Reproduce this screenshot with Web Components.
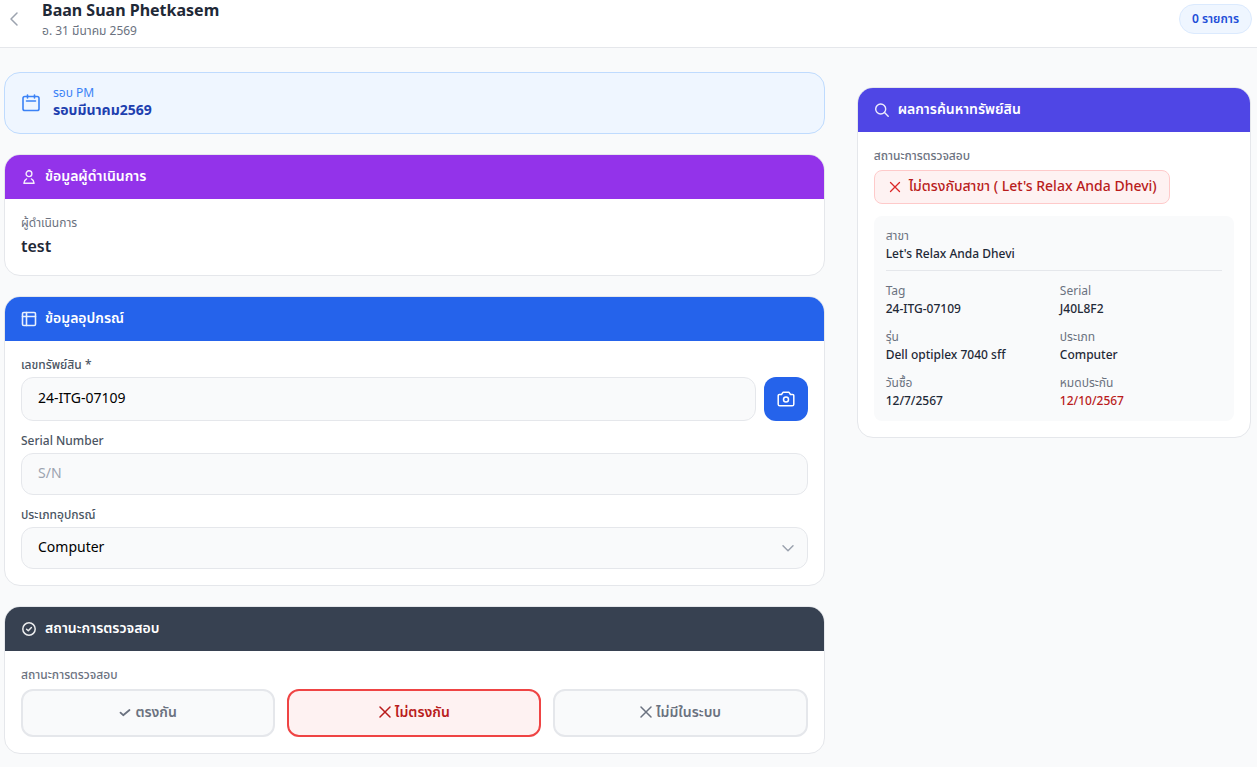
<!DOCTYPE html>
<html lang="th">
<head>
<meta charset="utf-8">
<meta name="viewport" content="width=device-width, initial-scale=1">
<title>Baan Suan Phetkasem</title>
<style>
  body { margin: 0; background: #f9fafb; color: #1f2937; font-family: "Noto Sans", "Noto Sans Thai", sans-serif; font-size: 14px; line-height: 20px; }
</style>
</head>
<body>
<pm-page></pm-page>

<template id="pm-icon">
  <style>
    :host { display: inline-flex; flex: none; width: 16px; height: 16px; }
    :host([size="12"]) { width: 12px; height: 12px; }
    :host([size="18"]) { width: 18px; height: 18px; }
    :host([size="20"]) { width: 20px; height: 20px; }
    svg { width: 100%; height: 100%; fill: none; stroke: currentColor; stroke-linecap: round; stroke-linejoin: round; }
  </style>
</template>

<template id="pm-topbar">
  <style>
    :host { display: block; background: #fff; border-bottom: 1px solid #e5e7eb; }
    header { display: flex; align-items: flex-start; padding: 0 5px 8px 4px; }
    button { display: flex; align-items: center; justify-content: center; width: 20px; height: 38px; margin: 0 18px 0 0; padding: 0; border: 0; background: none; color: #9ca3af; }
    .titles { flex: 1; }
    h1 { margin: 0 0 3px; font-size: 16px; line-height: 20px; font-weight: 700; }
    p { margin: 0; font-size: 12px; line-height: 16px; color: #6b7280; }
    .count { margin-top: 4px; padding: 6px 12px; border: 1px solid #dbeafe; border-radius: 999px; background: #eff6ff; color: #1d4ed8; font-size: 12px; line-height: 16px; font-weight: 600; }
  </style>
  <header>
    <button type="button" aria-label="กลับ"><pm-icon name="back" size="18"></pm-icon></button>
    <div class="titles"><h1><slot name="title"></slot></h1><p><slot name="date"></slot></p></div>
    <span class="count"><slot name="count"></slot></span>
  </header>
</template>

<template id="pm-round">
  <style>
    :host { display: flex; align-items: center; gap: 12px; padding: 12px 16px; border: 1px solid #bfdbfe; border-radius: 16px; background: #eff6ff; }
    pm-icon { color: #3b82f6; }
    .k { font-size: 12px; line-height: 16px; color: #3b82f6; }
    .v { padding-bottom: 2px; font-weight: 700; line-height: 18px; color: #1e40af; }
  </style>
  <pm-icon name="calendar" size="20"></pm-icon>
  <div><div class="k"><slot name="label"></slot></div><div class="v"><slot></slot></div></div>
</template>

<template id="pm-card">
  <style>
    :host { display: block; overflow: hidden; border: 1px solid #e5e7eb; border-radius: 16px; background: #fff; }
    .head { display: flex; align-items: center; gap: 8px; padding: 12px 16px; background: var(--head); color: #fff; }
    .head pm-icon { opacity: .9; }
    h2 { margin: 0; padding-bottom: 2px; font-size: 14px; line-height: 18px; font-weight: 600; }
    .body { padding: 16px; }
  </style>
  <div class="head"><pm-icon></pm-icon><h2></h2></div>
  <div class="body"><slot></slot></div>
</template>

<template id="pm-item">
  <style>
    :host { display: block; font-size: 12px; line-height: 16px; }
    .k { margin-bottom: 2px; color: #6b7280; }
    .v { font-weight: 500; color: #1f2937; }
    :host([expired]) .v { color: #b91c1c; }
    :host([large]) .k { margin-bottom: 4px; }
    :host([large]) .v { padding-bottom: 2px; font-size: 16px; line-height: 22px; font-weight: 600; }
  </style>
  <div class="k"></div><div class="v"><slot></slot></div>
</template>

<template id="pm-device-form">
  <style>
    :host { display: block; }
    form { display: grid; gap: 12px; }
    label { display: block; margin-bottom: 4px; font-size: 12px; line-height: 16px; font-weight: 500; color: #4b5563; }
    input, select { box-sizing: border-box; display: block; width: 100%; height: 42px; margin: 0; padding: 0 16px 2px; border: 1px solid #e5e7eb; border-radius: 12px; background: #f9fafb; color: #000; font: inherit; appearance: none; outline: none; }
    input { padding-bottom: 4px; }
    input::placeholder { color: #9ca3af; opacity: 1; }
    .row { display: flex; gap: 8px; }
    .row input { flex: 1; min-width: 0; height: 44px; }
    button { display: flex; align-items: center; justify-content: center; width: 44px; height: 44px; padding: 0; border: 0; border-radius: 12px; background: #2563eb; color: #fff; }
    .pick { display: grid; align-items: center; }
    .pick > * { grid-area: 1 / 1; }
    .pick pm-icon { justify-self: end; margin-right: 12px; color: #9ca3af; pointer-events: none; }
  </style>
  <form>
    <div>
      <label for="asset">เลขทรัพย์สิน *</label>
      <div class="row"><input id="asset" type="text" value="24-ITG-07109"><button type="button" aria-label="สแกน"><pm-icon name="camera" size="18"></pm-icon></button></div>
    </div>
    <div><label for="serial">Serial Number</label><input id="serial" type="text" placeholder="S/N"></div>
    <div>
      <label for="type">ประเภทอุปกรณ์</label>
      <div class="pick"><select id="type"><option>Computer</option></select><pm-icon name="down"></pm-icon></div>
    </div>
  </form>
</template>

<template id="pm-status-choice">
  <style>
    :host { display: block; }
    .label { margin-bottom: 6px; font-size: 12px; line-height: 16px; font-weight: 500; color: #6b7280; }
    .group { display: grid; grid-template-columns: repeat(3, 1fr); gap: 12px; }
    button { display: flex; align-items: center; justify-content: center; gap: 4px; height: 48px; padding: 0 0 2px; border: 2px solid #e5e7eb; border-radius: 12px; background: #f9fafb; color: #6b7280; font: inherit; font-weight: 600; }
    button[aria-pressed="true"] { border-color: #ef4444; background: #fef2f2; color: #b91c1c; }
  </style>
  <div class="label" id="l">สถานะการตรวจสอบ</div>
  <div class="group" role="group" aria-labelledby="l">
    <button type="button" aria-pressed="false"><pm-icon name="check" size="12"></pm-icon>ตรงกัน</button>
    <button type="button" aria-pressed="true"><pm-icon name="cross" size="12"></pm-icon>ไม่ตรงกัน</button>
    <button type="button" aria-pressed="false"><pm-icon name="cross" size="12"></pm-icon>ไม่มีในระบบ</button>
  </div>
</template>

<template id="pm-result">
  <style>
    :host { display: block; }
    .label { margin-bottom: 6px; font-size: 12px; line-height: 16px; font-weight: 500; color: #6b7280; }
    .badge { display: flex; width: fit-content; align-items: center; gap: 8px; margin-bottom: 12px; padding: 6px 12px 6px 14px; border: 1px solid #fecaca; border-radius: 8px; background: #fef2f2; color: #b91c1c; font-weight: 500; }
    .badge span { padding-bottom: 2px; line-height: 18px; }
    .badge pm-icon { color: #dc2626; }
    .panel { padding: 12px; border-radius: 8px; background: #f9fafb; }
    .branch { padding-bottom: 8px; margin-bottom: 12px; border-bottom: 1px solid #e5e7eb; }
    .facts { display: grid; grid-template-columns: 1fr 1fr; gap: 12px; }
  </style>
  <div class="label">สถานะการตรวจสอบ</div>
  <div class="badge"><pm-icon name="crossSmall" size="12"></pm-icon><span>ไม่ตรงกับสาขา ( Let's Relax Anda Dhevi)</span></div>
  <div class="panel">
    <pm-item class="branch" label="สาขา">Let's Relax Anda Dhevi</pm-item>
    <div class="facts">
      <pm-item label="Tag">24-ITG-07109</pm-item>
      <pm-item label="Serial">J40L8F2</pm-item>
      <pm-item label="รุ่น">Dell optiplex 7040 sff</pm-item>
      <pm-item label="ประเภท">Computer</pm-item>
      <pm-item label="วันซื้อ">12/7/2567</pm-item>
      <pm-item label="หมดประกัน" expired>12/10/2567</pm-item>
    </div>
  </div>
</template>

<template id="pm-page">
  <style>
    :host { display: block; }
    main { display: grid; grid-template-columns: repeat(3, minmax(0, 1fr)); column-gap: 32px; align-items: start; padding: 24px 6px 13px 4px; }
    .left { display: grid; grid-column: span 2; gap: 20px; }
    aside { padding-top: 15px; }
    .purple { --head: #9333ea; }
    .blue { --head: #2563eb; }
    .slate { --head: #374151; }
    .indigo { --head: #4f46e5; }
  </style>
  <pm-topbar><span slot="title">Baan Suan Phetkasem</span><span slot="date">อ. 31 มีนาคม 2569</span><span slot="count">0 รายการ</span></pm-topbar>
  <main>
    <div class="left">
      <pm-round><span slot="label">รอบ PM</span>รอบมีนาคม2569</pm-round>
      <pm-card class="purple" icon="user" heading="ข้อมูลผู้ดำเนินการ"><pm-item large label="ผู้ดำเนินการ">test</pm-item></pm-card>
      <pm-card class="blue" icon="layout" heading="ข้อมูลอุปกรณ์"><pm-device-form></pm-device-form></pm-card>
      <pm-card class="slate" icon="checkCircle" heading="สถานะการตรวจสอบ"><pm-status-choice></pm-status-choice></pm-card>
    </div>
    <aside><pm-card class="indigo" icon="search" heading="ผลการค้นหาทรัพย์สิน"><pm-result></pm-result></pm-card></aside>
  </main>
</template>

<script>
  const icons = {
    back: '<svg viewBox="0 0 18 18" stroke-width="1.5"><path d="M12 3 6 9l6 6"/></svg>',
    calendar: '<svg viewBox="0 0 20 20" stroke-width="1.6"><rect x="2" y="3.500" width="16" height="14" rx="1.800"/><path d="M5.500 8h9M6.500 2v3M13.500 2v3"/></svg>',
    user: '<svg viewBox="0 0 16 16" stroke-width="1.400"><circle cx="8" cy="4.700" r="2.900"/><path d="M5.600 9.900C4 10.600 3.200 11.800 2.900 14.300h10.200c-.3-2.500-1.100-3.700-2.700-4.400"/></svg>',
    layout: '<svg viewBox="0 0 16 16" stroke-width="1.600"><rect x="1.500" y="1.500" width="13" height="13" rx="1.300"/><path d="M1.500 5.500h13M5.500 1.500v13"/></svg>',
    checkCircle: '<svg viewBox="0 0 16 16" stroke-width="1.500"><circle cx="8" cy="8" r="6.200"/><path d="m5.600 8.200 1.700 1.500 3.100-3.200"/></svg>',
    search: '<svg viewBox="0 0 16 16" stroke-width="1.400"><circle cx="6.700" cy="7" r="5"/><path d="m10.500 10.500 3.700 3.700"/></svg>',
    camera: '<svg viewBox="0 0 18 18" stroke-width="1.500"><path d="M2.300 4.500h2.200L6 2.300h6l1.500 2.200h2.200q1.100 0 1.100 1.100v8.600q0 1.600-1.600 1.600H2.800q-1.600 0-1.600-1.600V5.600q0-1.100 1.100-1.100Z"/><circle cx="9" cy="9.500" r="2.500"/></svg>',
    down: '<svg viewBox="0 0 16 16" stroke-width="1.500"><path d="m3 5.700 5 5 5-5"/></svg>',
    check: '<svg viewBox="0 0 12 12" stroke-width="1.800"><path d="m1.500 6.600 2.700 2.600 6.300-5.200"/></svg>',
    cross: '<svg viewBox="0 0 12 12" stroke-width="1.500"><path d="m1 1 10 10M11 1 1 11"/></svg>',
    crossSmall: '<svg viewBox="0 0 12 12" stroke-width="1.300"><path d="m1.500 1.500 9 9M10.500 1.500l-9 9"/></svg>'
  };

  class PmElement extends HTMLElement {
    constructor() {
      super();
      this.attachShadow({ mode: 'open' });
      this.shadowRoot.append(document.getElementById(this.localName).content.cloneNode(true));
    }
  }

  customElements.define('pm-icon', class extends PmElement {
    static observedAttributes = ['name'];
    attributeChangedCallback() {
      this.shadowRoot.querySelector('svg')?.remove();
      this.shadowRoot.querySelector('style').insertAdjacentHTML('afterend', icons[this.getAttribute('name')] || '');
      this.setAttribute('aria-hidden', 'true');
    }
  });

  customElements.define('pm-card', class extends PmElement {
    connectedCallback() {
      this.shadowRoot.querySelector('pm-icon').setAttribute('name', this.getAttribute('icon'));
      this.shadowRoot.querySelector('h2').textContent = this.getAttribute('heading');
    }
  });

  customElements.define('pm-item', class extends PmElement {
    connectedCallback() {
      this.shadowRoot.querySelector('.k').textContent = this.getAttribute('label');
    }
  });

  for (const name of ['pm-topbar', 'pm-round', 'pm-device-form', 'pm-status-choice', 'pm-result', 'pm-page']) {
    customElements.define(name, class extends PmElement {});
  }
</script>
</body>
</html>
